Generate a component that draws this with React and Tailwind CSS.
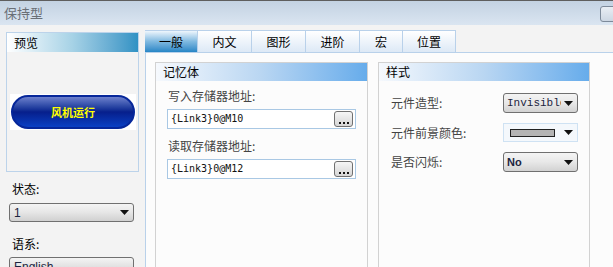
import React from "react";

const FONT = { fontFamily: '"Noto Sans CJK SC", "Noto Sans", sans-serif' };

function Arrow() {
  return (
    <svg width="9" height="5" viewBox="0 0 9 5" className="shrink-0">
      <path d="M0 0 L9 0 L4.5 5 Z" fill="#111" />
    </svg>
  );
}

function Select({ children, w = "w-[75px]", bold = false, mono = true }) {
  return (
    <div
      className={`${w} h-[20px] flex items-center justify-between pl-[3px] pr-[4px] rounded-[3px] border border-[#707070] bg-gradient-to-b from-[#f4f4f4] via-[#e8e8e8] to-[#d2d2d2] overflow-hidden`}
    >
      <span
        className={`w-[54px] shrink-0 text-[11px] leading-none text-[#1c2440] whitespace-nowrap overflow-hidden ${bold ? "font-bold" : ""}`}
        style={{ fontFamily: mono ? '"Liberation Mono", monospace' : '"Liberation Sans", sans-serif' }}
      >
        {children}
      </span>
      <Arrow />
    </div>
  );
}

function Input({ value }) {
  return (
    <div className="w-[189px] h-[20px] border border-[#a9c8e4] bg-white flex items-center justify-between pl-[3px] pr-[2px]">
      <span
        className="text-[10px] leading-none text-[#111]"
        style={{ fontFamily: '"DejaVu Sans Mono", monospace' }}
      >
        {value}
      </span>
      <div className="w-[19px] h-[16px] rounded-[3px] border border-[#707070] bg-gradient-to-b from-[#f6f6f6] to-[#d6d6d6] flex items-end justify-center pb-[2px] gap-[2px]">
        <span className="w-[2px] h-[2px] bg-[#111]" />
        <span className="w-[2px] h-[2px] bg-[#111]" />
        <span className="w-[2px] h-[2px] bg-[#111]" />
      </div>
    </div>
  );
}

function Tab({ label, w, active }) {
  return (
    <div
      className={`${w} h-[22px] flex items-center justify-center border border-l-0 border-b-0 border-[#b9d1ea] text-[12px] text-black ${
        active
          ? "bg-gradient-to-b from-[#eef6fc] via-[#7fb9e0] to-[#2586c6] border-l"
          : "bg-gradient-to-b from-[#ffffff] to-[#dde9f6]"
      }`}
    >
      {label}
    </div>
  );
}

function Group({ title, w, children }) {
  return (
    <div className={`${w} h-[220px] border border-[#d2d2d2] bg-[#fcfcfc] flex flex-col`}>
      <div className="h-[18px] flex items-center pl-[7px] text-[12px] text-black bg-gradient-to-r from-[#f6f9fd] via-[#b9d6f2] to-[#66aceb]">
        {title}
      </div>
      {children}
    </div>
  );
}

export default function App() {
  return (
    <div className="w-[613px] h-[267px] overflow-hidden bg-[#f3f3f3] flex flex-col" style={FONT}>
      {/* Title bar */}
      <div className="h-[25px] shrink-0 border-t border-[#5e5e5e] bg-gradient-to-b from-[#c3d2e2] to-[#dae5f1] flex items-center justify-between">
        <span className="pl-[4px] text-[13px] text-[#6a6f76]">保持型</span>
        <div className="w-[18px] h-[16px] mr-[-5px] mt-[2px] rounded-[3px] border border-[#7d8a9a] bg-gradient-to-b from-[#e9eef4] to-[#cdd7e3]" />
      </div>

      <div className="flex flex-1">
        {/* Left column */}
        <div className="w-[145px] shrink-0 pl-[6px] pt-[7px] flex flex-col">
          <div className="w-[133px] h-[140px] border border-[#bcd3ea] flex flex-col">
            <div className="h-[19px] flex items-center pl-[7px] text-[12px] text-black bg-gradient-to-r from-[#ffffff] via-[#a6d2e6] to-[#2f92c4]">
              预览
            </div>
            <div className="mt-[42px] ml-[3px] w-[126px] h-[36px] bg-white flex items-center justify-center">
              <div className="w-[124px] h-[34px] rounded-full border-2 border-[#06279a] bg-gradient-to-b from-[#6e80cc] via-[#071f8c] to-[#0a40c4] flex items-center justify-center">
                <span className="text-[11px] font-bold text-[#ffff00]">风机运行</span>
              </div>
            </div>
          </div>
          <div className="mt-[11px] pl-[6px] text-[12px] text-black leading-none">状态:</div>
          <div className="mt-[8px] ml-[3px]">
            <div className="w-[125px] h-[19px] flex items-center justify-between pl-[4px] pr-[4px] rounded-[3px] border border-[#707070] bg-gradient-to-b from-[#f4f4f4] via-[#e6e6e6] to-[#d0d0d0]">
              <span className="text-[12px] leading-none text-[#1c2440]" style={{ fontFamily: '"Liberation Sans", sans-serif' }}>1</span>
              <Arrow />
            </div>
          </div>
          <div className="mt-[16px] pl-[6px] text-[12px] text-black leading-none">语系:</div>
          <div className="mt-[7px] ml-[3px]">
            <div className="w-[125px] h-[19px] flex items-start pl-[4px] rounded-[3px] border border-[#707070] bg-gradient-to-b from-[#f4f4f4] to-[#d0d0d0] overflow-hidden">
              <span className="text-[12px] leading-none pt-[3px] text-[#1c2440]" style={{ fontFamily: '"Liberation Sans", sans-serif' }}>English</span>
            </div>
          </div>
        </div>

        {/* Tab control */}
        <div className="flex-1 flex flex-col pt-[5px]">
          <div className="flex h-[22px]">
            <Tab label="一般" w="w-[53px]" active />
            <Tab label="内文" w="w-[54px]" />
            <Tab label="图形" w="w-[54px]" />
            <Tab label="进阶" w="w-[54px]" />
            <Tab label="宏" w="w-[43px]" />
            <Tab label="位置" w="w-[53px]" />
          </div>
          <div className="flex-1 border-l border-t border-[#b9d1ea] bg-[#fcfcfc] pl-[9px] pt-[9px] flex gap-[10px]">
            <Group title="记忆体" w="w-[213px]">
              <div className="pl-[12px] pt-[9px] text-[12px] leading-none text-[#444]">写入存储器地址:</div>
              <div className="pl-[11px] pt-[7px]">
                <Input value="{Link3}0@M10" />
              </div>
              <div className="pl-[12px] pt-[11px] text-[12px] leading-none text-[#444]">读取存储器地址:</div>
              <div className="pl-[11px] pt-[7px]">
                <Input value="{Link3}0@M12" />
              </div>
            </Group>
            <Group title="样式" w="w-[212px]">
              <div className="pl-[12px] pr-[11px] pt-[12px] flex flex-col gap-[10px]">
                <div className="flex items-center justify-between">
                  <span className="text-[12px] text-[#444]">元件造型:</span>
                  <Select>Invisible</Select>
                </div>
                <div className="flex items-center justify-between">
                  <span className="text-[12px] text-[#444]">元件前景颜色:</span>
                  <div className="w-[75px] h-[19px] border border-[#cfe2f3] bg-[#f4f8fc] flex items-center justify-between pl-[6px] pr-[4px]">
                    <div className="w-[45px] h-[8px] border border-[#222] bg-[#b4b4b4]" />
                    <Arrow />
                  </div>
                </div>
                <div className="flex items-center justify-between">
                  <span className="text-[12px] text-[#444]">是否闪烁:</span>
                  <Select bold mono={false}>No</Select>
                </div>
              </div>
            </Group>
          </div>
        </div>
      </div>
    </div>
  );
}
